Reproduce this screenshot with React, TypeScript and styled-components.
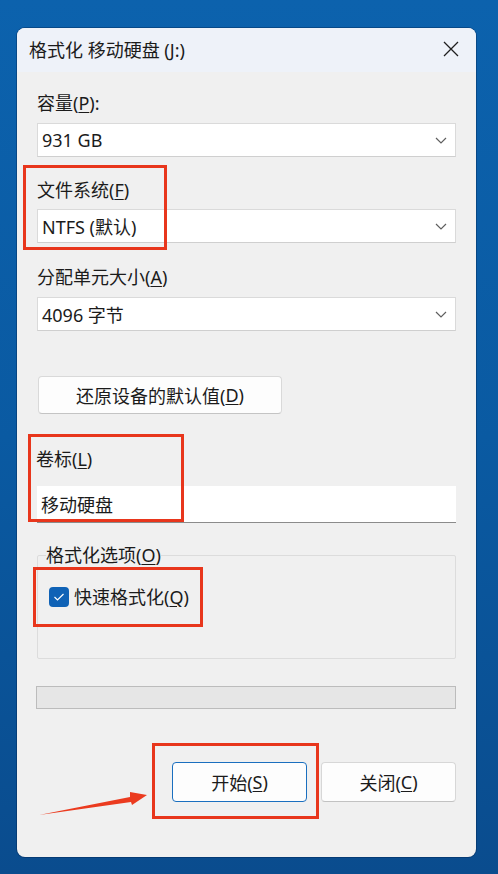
import styled, { createGlobalStyle } from "styled-components";

const GlobalStyle = createGlobalStyle`
  body {
    margin: 0;
    font-family: "Noto Sans", "Noto Sans CJK SC", sans-serif;
    color: #1b1b1b;
  }
`;

const MARK = "#e8361c";

interface Box {
  left: number;
  top: number;
  width: number;
  height: number;
}

// annotation boxes drawn over the dialog, window coordinates
const marks: Box[] = [
  { left: 6, top: 137, width: 144, height: 85 },
  { left: 11, top: 406, width: 156, height: 88 },
  { left: 16, top: 539, width: 170, height: 60 },
  { left: 135, top: 715, width: 167, height: 76 },
];

function Chevron() {
  return (
    <svg width="12" height="7" viewBox="0 0 12 7">
      <polyline points="1,1 6,6 11,1" fill="none" stroke="#5f5f5f" strokeWidth="1.2" />
    </svg>
  );
}

function Select({ value, top }: { value: string; top: number }) {
  return (
    <SelectBox $top={top}>
      <span>{value}</span>
      <Chevron />
    </SelectBox>
  );
}

export default function App() {
  return (
    <>
      <GlobalStyle />
      <Desktop>
        <Window>
          <TitleBar>
            <Title>格式化 移动硬盘 (J:)</Title>
            <svg width="16" height="16" viewBox="0 0 16 16">
              <path d="M1 1 L15 15 M15 1 L1 15" stroke="#1f1f1f" strokeWidth="1.3" />
            </svg>
          </TitleBar>
          <Body>
            <Label $top={19}>
              容量(<u>P</u>):
            </Label>
            <Select top={8} value="931 GB" />
            <Label $top={21}>
              文件系统(<u>F</u>)
            </Label>
            <Select top={7} value="NTFS (默认)" />
            <Label $top={22}>
              分配单元大小(<u>A</u>)
            </Label>
            <Select top={8} value="4096 字节" />

            <RestoreButton>
              还原设备的默认值(<u>D</u>)
            </RestoreButton>

            <Label $top={33} $shift={-1}>
              卷标(<u>L</u>)
            </Label>
            <TextBox>移动硬盘</TextBox>

            <Group>
              <Legend>
                格式化选项(<u>O</u>)
              </Legend>
              <CheckRow>
                <CheckBox>
                  <svg width="12" height="10" viewBox="0 0 12 10">
                    <polyline points="1.5,5 4.5,8 10.5,2" fill="none" stroke="#fff" strokeWidth="1.2" />
                  </svg>
                </CheckBox>
                <span>
                  快速格式化(<u>Q</u>)
                </span>
              </CheckRow>
            </Group>

            <Progress />

            <ButtonRow>
              <DialogButton $primary>
                开始(<u>S</u>)
              </DialogButton>
              <DialogButton>
                关闭(<u>C</u>)
              </DialogButton>
            </ButtonRow>
          </Body>

          {marks.map((m, i) => (
            <RedBox
              key={i}
              style={{ left: m.left, top: m.top, width: m.width, height: m.height }}
            />
          ))}
          <Arrow width="112" height="30" viewBox="0 0 112 30">
            <polygon points="2,27 93,9 93,4 110,7 95,17 94,14" fill="#eb3b1f" />
          </Arrow>
        </Window>
      </Desktop>
    </>
  );
}

const Desktop = styled.div`
  min-height: 874px;
  box-sizing: border-box;
  padding: 28px 22px 0 17px;
  background: linear-gradient(180deg, #0c62ad 0%, #0a5aa2 50%, #0a4c8e 100%);
`;

const Window = styled.div`
  position: relative;
  width: 459px;
  height: 829px;
  border-radius: 8px;
  background: #f0f0f0;
  overflow: hidden;
  box-shadow: 0 0 0 1px rgba(0, 30, 70, 0.35);
`;

const TitleBar = styled.div`
  height: 44px;
  display: flex;
  align-items: center;
  justify-content: space-between;
  padding: 0 17px 0 12px;
  background: #eef2f9;
  svg {
    margin-top: -2px;
  }
`;

const Title = styled.div`
  font-size: 18px;
  margin-top: -2px;
`;

const Body = styled.div`
  padding: 0 20px;
  display: flex;
  flex-direction: column;
  font-size: 18px;
`;

const Label = styled.div<{ $top: number; $shift?: number }>`
  margin-top: ${(p) => p.$top}px;
  margin-left: ${(p) => p.$shift ?? 0}px;
  line-height: 24px;
  height: 24px;
  u {
    text-underline-offset: 2px;
  }
`;

const SelectBox = styled.div<{ $top: number }>`
  margin-top: ${(p) => p.$top}px;
  height: 34px;
  box-sizing: border-box;
  display: flex;
  align-items: center;
  justify-content: space-between;
  padding: 0 8px 0 4px;
  background: #fff;
  border: 1px solid #dadada;
  border-bottom-color: #cfcfcf;
`;

const RestoreButton = styled.div`
  margin: 45px 0 0 1px;
  width: 244px;
  height: 38px;
  box-sizing: border-box;
  display: flex;
  align-items: center;
  justify-content: center;
  background: #fdfdfd;
  border: 1px solid #d9d9d9;
  border-bottom-color: #c4c4c4;
  border-radius: 4px;
  u {
    text-underline-offset: 2px;
  }
`;

const TextBox = styled.div`
  margin-top: 15px;
  height: 37px;
  box-sizing: border-box;
  display: flex;
  align-items: center;
  padding-left: 4px;
  background: #fff;
  border-bottom: 1px solid #8b8b8b;
`;

const Group = styled.fieldset`
  margin: 20px 0 0;
  min-inline-size: 0;
  padding: 0 0 49px 8px;
  border: 1px solid #dcdcdc;
  border-radius: 2px;
`;

const Legend = styled.legend`
  padding: 0;
  line-height: 24px;
  u {
    text-underline-offset: 2px;
  }
`;

const CheckRow = styled.div`
  margin: 18px 0 0 3px;
  display: flex;
  align-items: center;
  gap: 5px;
  line-height: 24px;
  u {
    text-underline-offset: 2px;
  }
`;

const CheckBox = styled.span`
  width: 20px;
  height: 20px;
  border-radius: 4px;
  background: #0f62b6;
  display: flex;
  align-items: center;
  justify-content: center;
`;

const Progress = styled.div`
  margin: 27px 0 0 -1px;
  height: 23px;
  box-sizing: border-box;
  background: #e6e6e6;
  border: 1px solid #bcbcbc;
`;

const ButtonRow = styled.div`
  margin-top: 53px;
  display: flex;
  justify-content: flex-end;
  gap: 14px;
`;

const DialogButton = styled.div<{ $primary?: boolean }>`
  width: 135px;
  height: 40px;
  box-sizing: border-box;
  display: flex;
  align-items: center;
  justify-content: center;
  border-radius: 4px;
  background: #fdfdfd;
  border: 1px solid ${(p) => (p.$primary ? "#1a6fbf" : "#d7d7d7")};
  border-bottom-color: ${(p) => (p.$primary ? "#1a6fbf" : "#c2c2c2")};
  u {
    text-underline-offset: 2px;
  }
`;

const RedBox = styled.div`
  position: absolute;
  box-sizing: border-box;
  border: 3px solid ${MARK};
  pointer-events: none;
`;

const Arrow = styled.svg`
  position: absolute;
  left: 20px;
  top: 760px;
`;
